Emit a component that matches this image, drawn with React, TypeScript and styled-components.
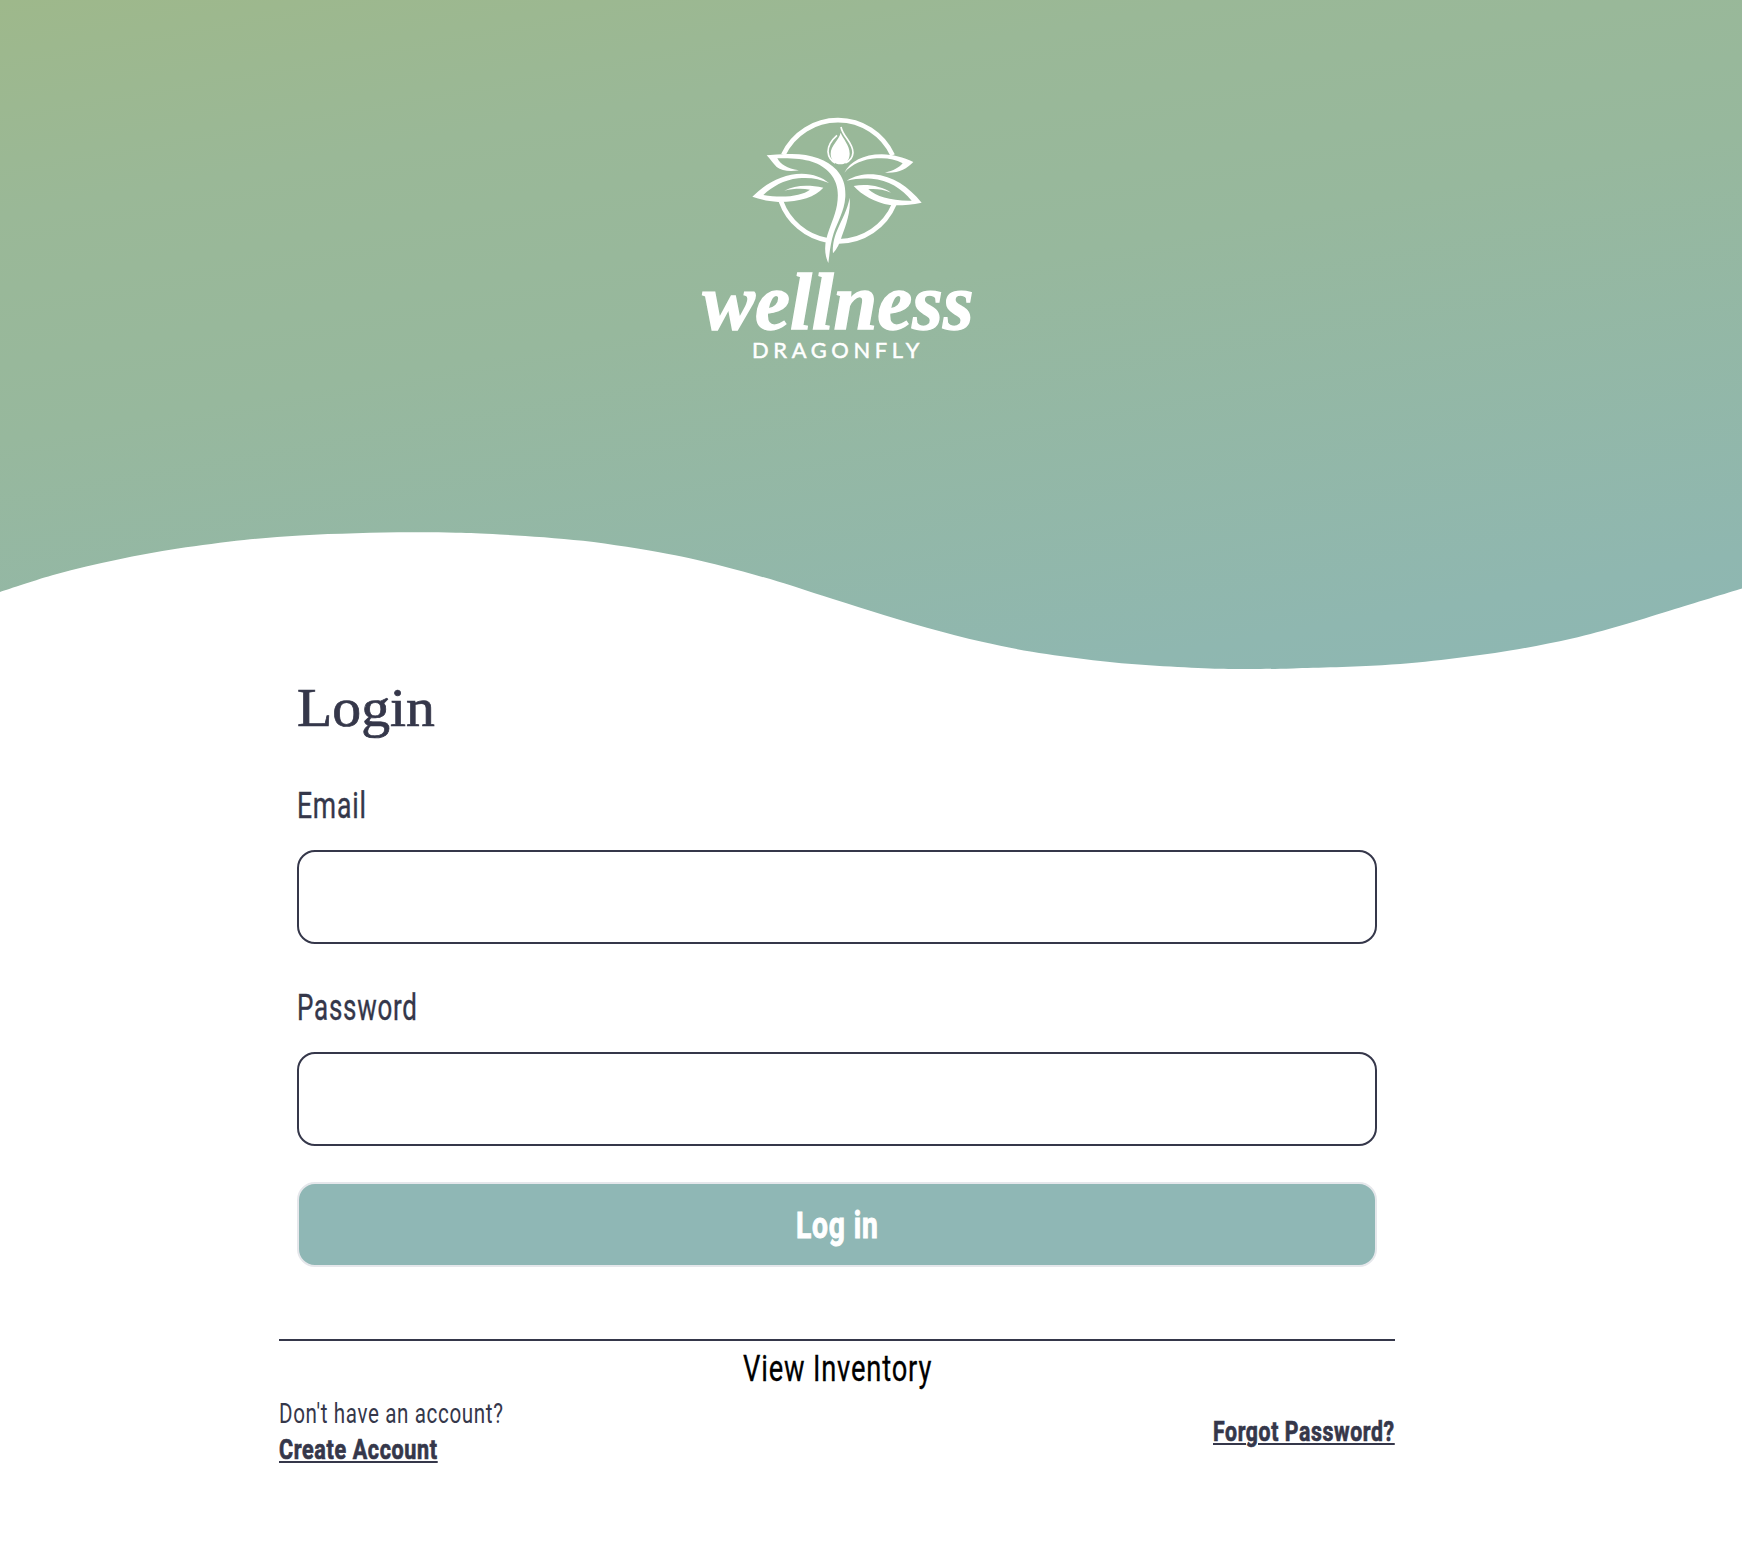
import React, { useLayoutEffect, useRef, useState } from "react";
import styled, { createGlobalStyle } from "styled-components";

const ink = "#35374a";
const teal = "#8fb7b5";

const GlobalStyle = createGlobalStyle`
  *, *::before, *::after { box-sizing: border-box; }
  body {
    margin: 0;
    background: #fff;
    color: ${ink};
    font-family: Roboto, "Liberation Sans", sans-serif;
  }
`;

const Page = styled.div`
  min-height: 1562px;
  display: flex;
  flex-direction: column;
`;

const Hero = styled.header`
  height: 670px;
  display: flex;
  flex-direction: column;
  background: linear-gradient(170deg, #9eb88b 0%, #9ab897 22%, #97b89d 45%, #8fb7b0 88%, #8db7b3 100%);
`;

const Logo = styled.svg`
  display: block;
  width: 270px;
  height: 248px;
  margin: 117px 0 0 702px;
  fill: #fff;
  overflow: visible;
`;

const Wave = styled.svg`
  display: block;
  width: 100%;
  height: 140px;
  margin-top: auto;
  fill: #fff;
`;

const Main = styled.main`
  width: 1116px;
  margin-left: 279px;
  padding-top: 8px;
`;

const FitBox = styled.span<{ $width: number }>`
  display: block;
  width: ${(p) => p.$width}px;
  white-space: nowrap;
`;

const FitInner = styled.span`
  display: inline-block;
  vertical-align: top;
  transform-origin: 0 50%;
`;

const Form = styled.form`
  display: flex;
  flex-direction: column;
  padding: 0 18px;
`;

const Title = styled.h1`
  margin: 0 0 46px;
  font: 400 54px/60px "Liberation Serif", serif;
  -webkit-text-stroke: 0.7px ${ink};
`;

const Field = styled.label<{ $gap: number }>`
  display: flex;
  flex-direction: column;
  gap: 22px;
  margin-bottom: ${(p) => p.$gap}px;
  font-size: 36px;
  line-height: 44px;
  letter-spacing: 0.03em;
  -webkit-text-stroke: 0.4px currentColor;
`;

const Input = styled.input`
  width: 100%;
  height: 94px;
  padding: 0 24px;
  border: 2px solid ${ink};
  border-radius: 18px;
  background: #fff;
  font: inherit;
  color: inherit;
  outline: none;
`;

const Submit = styled.button`
  display: flex;
  justify-content: center;
  align-items: center;
  height: 85px;
  padding: 2px 0 0;
  border: 2px solid #e5e7eb;
  border-radius: 18px;
  background: ${teal};
  color: #fff;
  font: 700 36px/44px Roboto, sans-serif;
  letter-spacing: 0.03em;
  -webkit-text-stroke: 1px currentColor;
`;

const Divider = styled.hr`
  height: 2px;
  margin: 72px 0 6px;
  border: 0;
  background: ${ink};
`;

const Inventory = styled.a`
  display: flex;
  justify-content: center;
  color: #000;
  font-size: 36px;
  line-height: 44px;
  letter-spacing: 0.03em;
  -webkit-text-stroke: 0.3px currentColor;
`;

const Footer = styled.div`
  display: flex;
  justify-content: space-between;
  align-items: center;
  margin-top: 4.5px;
  font-size: 27px;
  line-height: 36px;
  letter-spacing: 0.03em;
`;

const FooterLink = styled.a`
  display: block;
  font-weight: 700;
  -webkit-text-stroke: 0.7px currentColor;

  ${FitInner} {
    text-decoration: underline;
    text-decoration-thickness: 2px;
    text-underline-offset: 2px;
  }
`;

/* Condenses a line of text so that it fills the given width. */
function Fit({ width, children }: { width: number; children: React.ReactNode }) {
  const ref = useRef<HTMLSpanElement>(null);
  const [scale, setScale] = useState(1);
  useLayoutEffect(() => {
    if (ref.current) setScale(width / ref.current.offsetWidth);
  }, [width]);
  return (
    <FitBox $width={width}>
      <FitInner ref={ref} style={{ transform: `scaleX(${scale})` }}>
        {children}
      </FitInner>
    </FitBox>
  );
}

const crest: [number, number][] = [
  [0, 62], [56, 44.3], [117, 29.8], [178, 18.6], [244, 10], [300, 5.4], [356, 3.2],
  [411, 2.3], [456, 2.7], [500, 4.4], [583, 10.8], [667, 23.7], [722, 36], [778, 51.5],
  [822, 65.5], [871, 81], [927, 97.7], [982, 111.8], [1032, 121.8], [1093, 130.2],
  [1149, 135.3], [1204, 138.2], [1243, 139], [1293, 138.4], [1382, 135.3],
  [1449, 129.1], [1510, 120.6], [1571, 108.8], [1621, 95.5], [1671, 80.3], [1742, 58.6],
];

function smooth(points: [number, number][]) {
  let d = `M${points[0].join(" ")}`;
  for (let i = 0; i < points.length - 1; i++) {
    const a = points[Math.max(i - 1, 0)];
    const b = points[i];
    const c = points[i + 1];
    const e = points[Math.min(i + 2, points.length - 1)];
    d += ` C${b[0] + (c[0] - a[0]) / 6} ${b[1] + (c[1] - a[1]) / 6} ${c[0] - (e[0] - b[0]) / 6} ${c[1] - (e[1] - b[1]) / 6} ${c[0]} ${c[1]}`;
  }
  return d;
}

function Brand() {
  return (
    <Logo viewBox="0 0 270 248" role="img" aria-label="Wellness Dragonfly">
      <g transform="translate(38 -12) scale(0.33333)">
        <g fill="none" stroke="#fff">
          <path strokeWidth="14" d="M130 149 A181 181 0 0 1 458 151" />
          <path strokeWidth="14" d="M123 289 A182 182 0 0 0 262 406" />
          <path strokeWidth="14" d="M297 409 A182 182 0 0 0 463 297" />
          <path strokeWidth="5" d="M303 66 C308 95 339 112 339 143 C338 158 330 168 316 174" />
          <path strokeWidth="5" d="M291 91 C275 105 264 120 264 140 C265 156 273 167 286 174" />
        </g>
        <path d="M302 83 C308 100 329 120 329 146 C329 166 317 178 301 178 C285 178 272 166 272 146 C272 122 297 105 302 83Z" />
        <path d="M80 151 C105 148 130 146 155 147 C215 147 262 165 290 195 C312 220 317 245 316 275 C313 320 292 350 281 385 C271 415 269 445 265 474 C256 455 252 430 259 402 C268 365 285 335 291 300 C297 262 293 232 270 205 C240 170 195 158 112 160 C122 178 140 190 177 196 C150 201 125 198 110 186 C98 175 92 163 80 151Z" />
        <path d="M37 275 C80 232 130 207 185 206 C220 206 248 218 267 234 C238 222 210 216 175 220 C130 225 98 245 70 270 C130 280 185 273 210 254 C185 250 160 251 133 257 C165 240 205 239 250 248 C225 275 185 290 115 291 C85 290 60 283 37 275Z" />
        <path d="M313 203 C330 170 370 148 425 148 C460 149 490 157 520 171 C500 192 475 206 435 203 C460 197 478 188 488 175 C465 162 440 158 410 160 C370 162 335 178 313 203Z" />
        <path d="M320 227 C345 212 370 207 400 208 C460 213 505 245 545 293 C510 300 475 302 450 300 C405 293 365 270 341 243 C380 236 425 243 453 263 C430 253 405 251 385 253 C410 275 450 288 515 287 C485 250 445 224 395 221 C368 219 345 221 320 227Z" />
        <path d="M329 278 C333 320 318 360 305 395 C300 415 290 432 279 445 C277 425 281 400 292 375 C306 342 322 315 329 278Z" />
      </g>
      <text
        x="0.5"
        y="212"
        textLength="271"
        lengthAdjust="spacingAndGlyphs"
        fontFamily="Liberation Serif, serif"
        fontWeight="700"
        fontStyle="italic"
        fontSize="81"
        stroke="#fff"
        strokeWidth="1.4"
      >
        wellness
      </text>
      <text
        x="50"
        y="240.7"
        textLength="172"
        lengthAdjust="spacingAndGlyphs"
        letterSpacing="4.6"
        fontFamily="Lato, sans-serif"
        fontWeight="400"
        fontSize="21.5"
        stroke="#fff"
        strokeWidth="0.5"
      >
        DRAGONFLY
      </text>
    </Logo>
  );
}

export default function App() {
  return (
    <Page>
      <GlobalStyle />
      <Hero>
        <Brand />
        <Wave viewBox="0 0 1742 140" preserveAspectRatio="none" aria-hidden="true">
          <path d={`${smooth(crest)} V140.5 H0 Z`} />
        </Wave>
      </Hero>
      <Main>
        <Form onSubmit={(e) => e.preventDefault()}>
          <Title>
            <Fit width={138}>Login</Fit>
          </Title>
          <Field $gap={42}>
            <Fit width={70}>Email</Fit>
            <Input type="email" />
          </Field>
          <Field $gap={36}>
            <Fit width={121}>Password</Fit>
            <Input type="password" />
          </Field>
          <Submit type="submit">
            <Fit width={83}>Log in</Fit>
          </Submit>
        </Form>
        <Divider />
        <Inventory>
          <Fit width={189}>View Inventory</Fit>
        </Inventory>
        <Footer>
          <div>
            <Fit width={224.5}>Don't have an account?</Fit>
            <FooterLink>
              <Fit width={158.7}>Create Account</Fit>
            </FooterLink>
          </div>
          <FooterLink>
            <Fit width={182}>Forgot Password?</Fit>
          </FooterLink>
        </Footer>
      </Main>
    </Page>
  );
}
